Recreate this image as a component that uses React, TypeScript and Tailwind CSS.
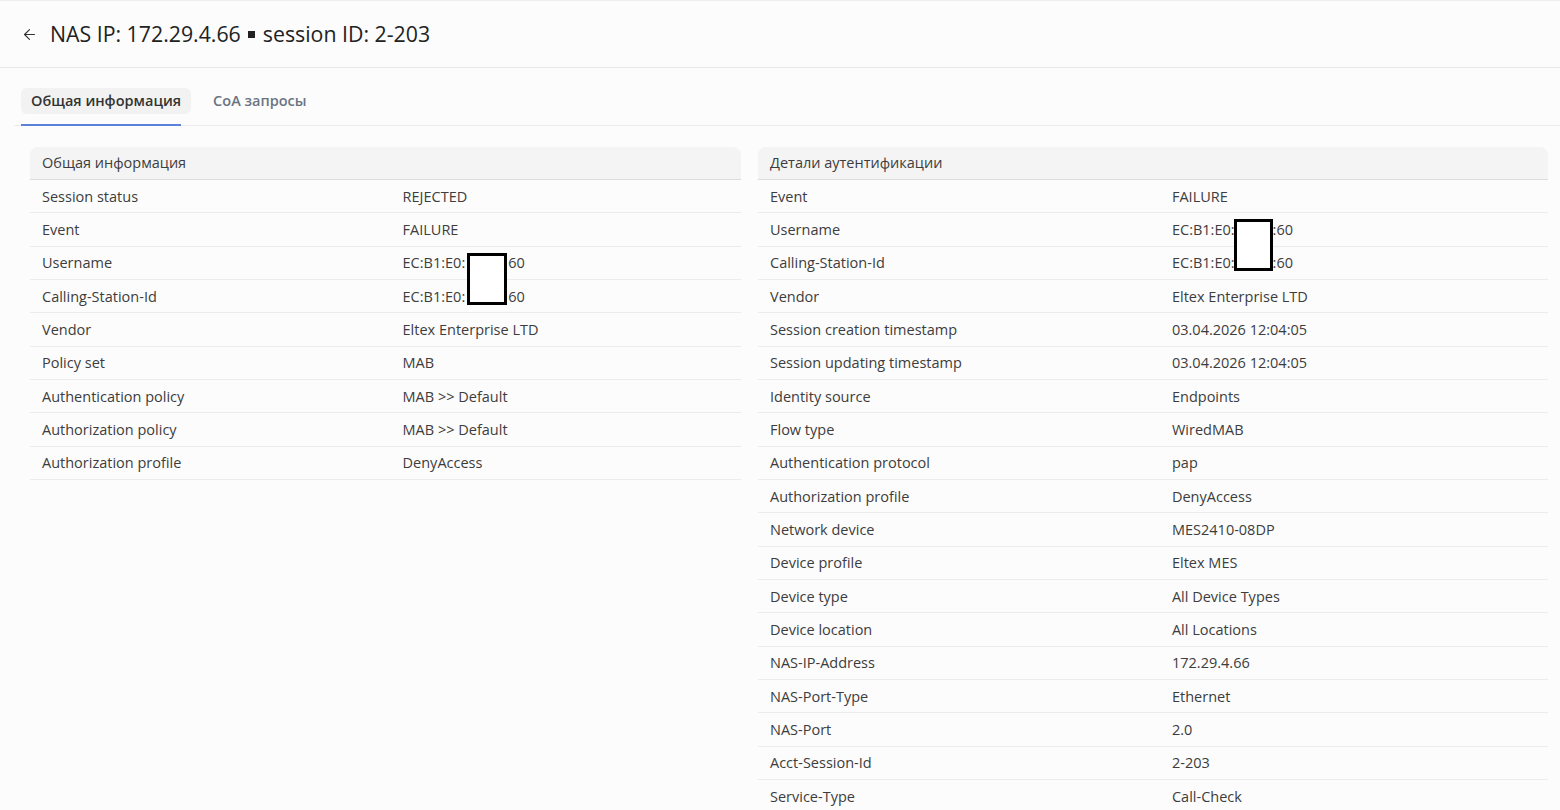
import { ArrowLeft } from 'lucide-react';

type Row = [string, React.ReactNode];

const Masked = ({ gap, tail }: { gap: string; tail: string }) => (
    <span className="whitespace-nowrap">
        EC:B1:E0:<span className={`inline-block ${gap}`}></span>
        {tail}
    </span>
);

const general: Row[] = [
    ['Session status', 'REJECTED'],
    ['Event', 'FAILURE'],
    ['Username', <Masked gap="w-[43px]" tail="60" />],
    ['Calling-Station-Id', <Masked gap="w-[43px]" tail="60" />],
    ['Vendor', 'Eltex Enterprise LTD'],
    ['Policy set', 'MAB'],
    ['Authentication policy', 'MAB >> Default'],
    ['Authorization policy', 'MAB >> Default'],
    ['Authorization profile', 'DenyAccess'],
];

const auth: Row[] = [
    ['Event', 'FAILURE'],
    ['Username', <Masked gap="w-[38px]" tail=":60" />],
    ['Calling-Station-Id', <Masked gap="w-[38px]" tail=":60" />],
    ['Vendor', 'Eltex Enterprise LTD'],
    ['Session creation timestamp', '03.04.2026 12:04:05'],
    ['Session updating timestamp', '03.04.2026 12:04:05'],
    ['Identity source', 'Endpoints'],
    ['Flow type', 'WiredMAB'],
    ['Authentication protocol', 'pap'],
    ['Authorization profile', 'DenyAccess'],
    ['Network device', 'MES2410-08DP'],
    ['Device profile', 'Eltex MES'],
    ['Device type', 'All Device Types'],
    ['Device location', 'All Locations'],
    ['NAS-IP-Address', '172.29.4.66'],
    ['NAS-Port-Type', 'Ethernet'],
    ['NAS-Port', '2.0'],
    ['Acct-Session-Id', '2-203'],
    ['Service-Type', 'Call-Check'],
];

function InfoTable({ title, rows, children }: { title: string; rows: Row[]; children?: React.ReactNode }) {
    return (
        <div className="relative">
            <div className="h-[33px] flex items-center px-3 bg-[#f4f4f4] rounded-t-lg border-b border-[#dcdcdc] text-[14.5px] text-[#3d3d3d]">
                {title}
            </div>
            {rows.map(([label, value]) => (
                <div
                    key={label}
                    className="h-[33.33px] grid grid-cols-[52.4%_1fr] items-center border-b border-[#ececec] text-[14.5px] text-[#3d3d3d]"
                >
                    <div className="pl-3 pt-px">{label}</div>
                    <div className="whitespace-pre pt-px">{value}</div>
                </div>
            ))}
            {children}
        </div>
    );
}

export default function App() {
    return (
        <div className="bg-[#fcfcfc] font-['Open_Sans','Noto_Sans',sans-serif] overflow-hidden h-[810px]">
            {/* Header */}
            <div className="h-[68px] flex items-center px-[21px] border-b border-[#e8e8e8] border-t border-t-[#eeeeee]">
                <ArrowLeft className="w-[17px] h-[17px] text-[#333] mr-[12px]" strokeWidth={1.6} />
                <h1 className="text-[21.3px] font-medium text-[#222] flex items-center">
                    NAS IP: 172.29.4.66
                    <span className="inline-block w-[7px] h-[7px] bg-[#222] ml-[7px] mr-[8px]"></span>
                    session ID: 2-203
                </h1>
            </div>

            {/* Tabs */}
            <div className="mt-[20px] ml-[14px] pl-[7px] flex items-start gap-[22px] border-b border-[#ececec] h-[38px]">
                <div className="relative h-full">
                    <div className="h-[26px] px-[10px] flex items-center rounded-md bg-[#f2f2f2] text-[14.5px] font-semibold text-[#333]">
                        Общая информация
                    </div>
                    <div className="absolute left-0 right-[10px] bottom-[-1px] h-[2px] bg-[#5b82d8]"></div>
                </div>
                <div className="h-[26px] flex items-center text-[14.5px] font-semibold text-[#6b7483]">
                    CoA запросы
                </div>
            </div>

            {/* Content */}
            <div className="mt-[21px] ml-[30px] mr-[12px] flex items-start gap-[17px]">
                <div className="w-[711px]">
                    <InfoTable title="Общая информация" rows={general}>
                        <div className="absolute left-[437px] top-[106px] w-[40px] h-[52px] bg-white border-[3px] border-black"></div>
                    </InfoTable>
                </div>
                <div className="flex-1">
                    <InfoTable title="Детали аутентификации" rows={auth}>
                        <div className="absolute left-[476px] top-[72px] w-[39px] h-[52px] bg-white border-[3px] border-black"></div>
                    </InfoTable>
                </div>
            </div>
        </div>
    );
}
